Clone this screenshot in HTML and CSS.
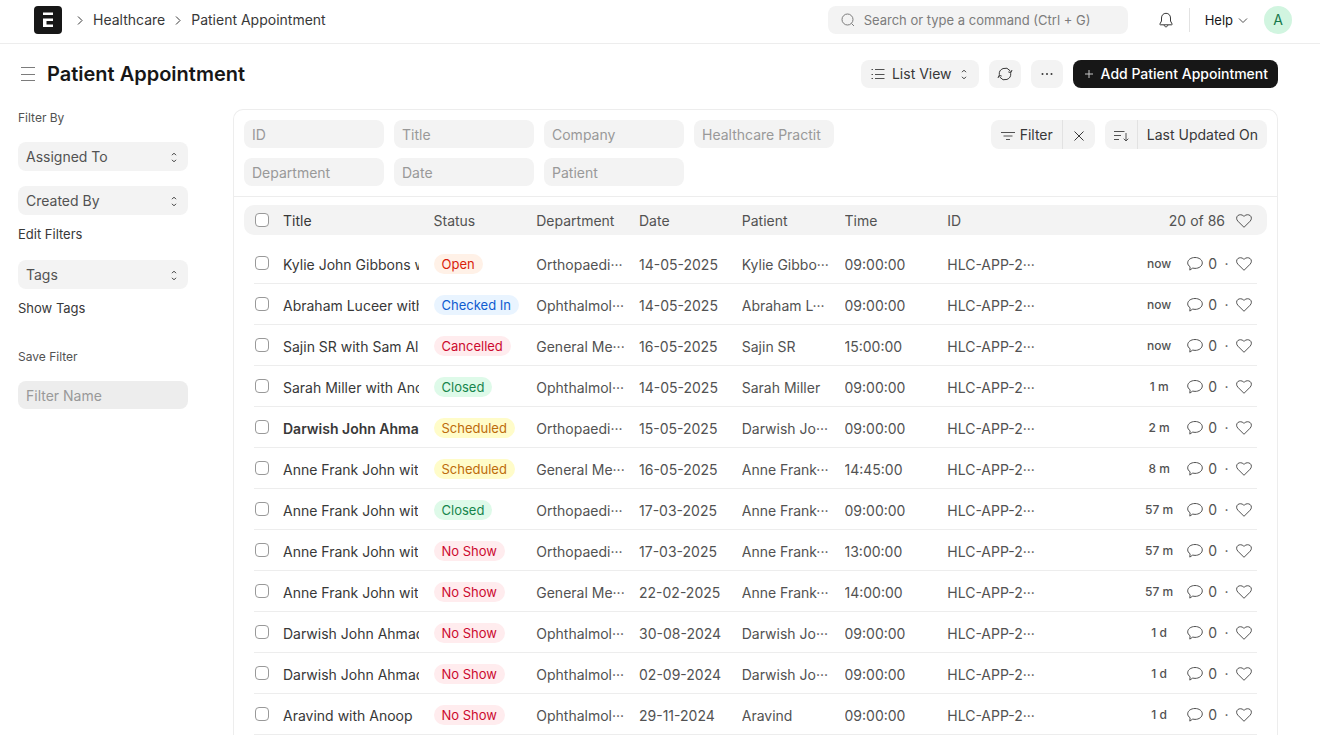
FILE: index.html
```html
<!DOCTYPE html>
<html lang="en">
<head>
  <meta charset="utf-8">
  <meta name="viewport" content="width=device-width, initial-scale=1">
  <title>Patient Appointment</title>
  <link rel="stylesheet" href="styles.css">
</head>
<body>
  <!-- icons -->
  <svg class="sprite" aria-hidden="true">
    <symbol id="i-right" viewBox="0 0 12 12"><path d="M4 2.500 8 6.500 4 10.500"/></symbol>
    <symbol id="i-down" viewBox="0 0 12 12"><path d="M2 4.500l4 4 4-4"/></symbol>
    <symbol id="i-select" viewBox="0 0 12 12"><path d="M4 4.200 6 2.200l2 2M4 8.800l2 2 2-2"/></symbol>
    <symbol id="i-heart" viewBox="0 0 16 16"><path d="M8 14.300 1.900 8.200C.2 6.500.2 3.900 1.800 2.600c1.700-1.300 4.200-1.100 5.600.3L8 3.400l.6-.5c1.400-1.400 3.900-1.600 5.600-.3 1.600 1.300 1.600 3.900-.1 5.600z"/></symbol>
    <symbol id="i-comment" viewBox="0 0 16 16"><path d="M8 1.500c4.100 0 7.300 2.300 7.300 5.400s-3.200 5.500-7.300 5.500c-.8 0-1.600-.1-2.300-.3l-2.900 2 .3-3.300C1.500 9.700.7 8.400.7 6.900.7 3.800 3.900 1.500 8 1.500z"/></symbol>
  </svg>

  <header class="navbar">
    <nav class="crumbs">
      <a href="#" class="logo" aria-label="Home">
        <svg width="28" height="28" viewBox="0 0 28 28"><rect width="28" height="28" rx="4" fill="#171717"/><path d="M9 6.500h10v2.500H9zM9 12.500h10v2.500h-6.500v3.500H19V21H9z" fill="#fff"/></svg>
      </a>
      <svg class="icon sep"><use href="#i-right"/></svg>
      <a href="#">Healthcare</a>
      <svg class="icon sep"><use href="#i-right"/></svg>
      <a href="#">Patient Appointment</a>
    </nav>
    <div class="nav-right">
      <label class="search">
        <svg class="icon" viewBox="0 0 16 16"><circle cx="7.500" cy="7.500" r="5.500"/><path d="M11.500 11.500 14 14"/></svg>
        <input type="text" aria-label="Search" placeholder="Search or type a command (Ctrl + G)">
      </label>
      <button class="bell" aria-label="Notifications">
        <svg class="icon" viewBox="0 0 16 16"><path d="M8 1.300c-2.700 0-4.500 2-4.500 4.700v3L1.900 12c-.2.400 0 .8.500.8h11.200c.5 0 .7-.4.500-.8L12.500 9V6c0-2.700-1.800-4.700-4.500-4.700zM6.200 13c.1 1.100.8 1.800 1.800 1.800s1.700-.7 1.800-1.800"/></svg>
      </button>
      <button class="help">Help <svg class="icon"><use href="#i-down"/></svg></button>
      <button class="avatar">A</button>
    </div>
  </header>

  <div class="page-head">
    <button class="menu" aria-label="Toggle sidebar">
      <svg class="icon" viewBox="0 0 16 14"><path d="M1 .5h14M1 7.500h14M1 13.500h14"/></svg>
    </button>
    <h1>Patient Appointment</h1>
    <div class="actions">
      <button class="btn view">
        <svg class="icon" viewBox="0 0 16 16"><path d="M5 3.500h9.500M5 8.500h9.500M5 12.500h9.500M1.500 3.500H3M1.500 8.500H3M1.500 12.500H3"/></svg>
        List View
        <svg class="icon select"><use href="#i-select"/></svg>
      </button>
      <button class="btn square" aria-label="Refresh">
        <svg class="icon dark" viewBox="0 0 16 16"><path d="M2.300 8.800A5.900 5.900 0 0 1 13 4.700l.8 1M13.700 7.200A5.900 5.900 0 0 1 3 11.300l-.8-1M15 4l-1.100 2.700-2.600-.8M1 12l1.100-2.700 2.600.8"/></svg>
      </button>
      <button class="btn square" aria-label="More">
        <svg class="icon dots" viewBox="0 0 16 16"><circle cx="3.500" cy="8" r="1"/><circle cx="8" cy="8" r="1"/><circle cx="12.500" cy="8" r="1"/></svg>
      </button>
      <button class="btn primary">
        <svg class="icon plus" viewBox="0 0 10 10"><path d="M5 1v8M1 5h8"/></svg>
        Add Patient Appointment
      </button>
    </div>
  </div>

  <div class="layout">
    <aside class="sidebar">
      <p class="side-label">Filter By</p>
      <button class="side-btn">Assigned To <svg class="icon select"><use href="#i-select"/></svg></button>
      <button class="side-btn">Created By <svg class="icon select"><use href="#i-select"/></svg></button>
      <a href="#" class="side-link">Edit Filters</a>
      <button class="side-btn">Tags <svg class="icon select"><use href="#i-select"/></svg></button>
      <a href="#" class="side-link">Show Tags</a>
      <label class="side-label save" for="filter-name">Save Filter</label>
      <input type="text" id="filter-name" class="filter-name" placeholder="Filter Name">
    </aside>

    <main class="list">
      <div class="filters">
        <div class="fields">
          <input type="text" aria-label="ID" placeholder="ID">
          <input type="text" aria-label="Title" placeholder="Title">
          <input type="text" aria-label="Company" placeholder="Company">
          <input type="text" aria-label="Healthcare Practitioner" placeholder="Healthcare Practit">
          <input type="text" aria-label="Department" placeholder="Department">
          <input type="text" aria-label="Date" placeholder="Date">
          <input type="text" aria-label="Patient" placeholder="Patient">
        </div>
        <div class="group">
          <button>
            <svg class="icon" viewBox="0 0 16 16"><path d="M1 5.500h14M3.500 9h9M6 12.500h4"/></svg>
            Filter
          </button>
          <button class="icon-only" aria-label="Clear filters">
            <svg class="icon dark" viewBox="0 0 16 16"><path d="M3.500 4.500l9 9M12.500 4.500l-9 9"/></svg>
          </button>
        </div>
        <div class="group">
          <button class="icon-only" aria-label="Sort direction">
            <svg class="icon" viewBox="0 0 16 16"><path d="M1 4.500h10.500M1 8.500h7M1 12.500h5M13 6v8M10.700 11.700 13 14l2.300-2.300"/></svg>
          </button>
          <button>Last Updated On</button>
        </div>
      </div>

      <table>
        <thead>
          <tr>
            <th class="subject"><input type="checkbox" aria-label="Select all"><span>Title</span></th>
            <th>Status</th><th>Department</th><th>Date</th><th>Patient</th><th>Time</th><th>ID</th>
            <th class="meta">20 of 86 <svg class="icon heart"><use href="#i-heart"/></svg></th>
          </tr>
        </thead>
        <tbody>
          <tr>
            <td class="subject"><input type="checkbox" aria-label="Select row"><span>Kylie John Gibbons with</span></td>
            <td class="status"><span class="pill orange">Open</span></td>
            <td>Orthopaedi···</td><td>14-05-2025</td><td>Kylie Gibbo···</td><td>09:00:00</td><td>HLC-APP-2···</td>
            <td class="meta"><span class="ago">now</span><svg class="icon comment"><use href="#i-comment"/></svg><span>0</span><span class="dot">·</span><svg class="icon heart"><use href="#i-heart"/></svg></td>
          </tr>
          <tr>
            <td class="subject"><input type="checkbox" aria-label="Select row"><span>Abraham Luceer with</span></td>
            <td class="status"><span class="pill blue">Checked In</span></td>
            <td>Ophthalmol···</td><td>14-05-2025</td><td>Abraham L···</td><td>09:00:00</td><td>HLC-APP-2···</td>
            <td class="meta"><span class="ago">now</span><svg class="icon comment"><use href="#i-comment"/></svg><span>0</span><span class="dot">·</span><svg class="icon heart"><use href="#i-heart"/></svg></td>
          </tr>
          <tr>
            <td class="subject"><input type="checkbox" aria-label="Select row"><span>Sajin SR with Sam Al</span></td>
            <td class="status"><span class="pill red">Cancelled</span></td>
            <td>General Me···</td><td>16-05-2025</td><td>Sajin SR</td><td>15:00:00</td><td>HLC-APP-2···</td>
            <td class="meta"><span class="ago">now</span><svg class="icon comment"><use href="#i-comment"/></svg><span>0</span><span class="dot">·</span><svg class="icon heart"><use href="#i-heart"/></svg></td>
          </tr>
          <tr>
            <td class="subject"><input type="checkbox" aria-label="Select row"><span>Sarah Miller with Ano</span></td>
            <td class="status"><span class="pill green">Closed</span></td>
            <td>Ophthalmol···</td><td>14-05-2025</td><td>Sarah Miller</td><td>09:00:00</td><td>HLC-APP-2···</td>
            <td class="meta"><span class="ago">1 m</span><svg class="icon comment"><use href="#i-comment"/></svg><span>0</span><span class="dot">·</span><svg class="icon heart"><use href="#i-heart"/></svg></td>
          </tr>
          <tr>
            <td class="subject unseen"><input type="checkbox" aria-label="Select row"><span>Darwish John Ahma</span></td>
            <td class="status"><span class="pill yellow">Scheduled</span></td>
            <td>Orthopaedi···</td><td>15-05-2025</td><td>Darwish Jo···</td><td>09:00:00</td><td>HLC-APP-2···</td>
            <td class="meta"><span class="ago">2 m</span><svg class="icon comment"><use href="#i-comment"/></svg><span>0</span><span class="dot">·</span><svg class="icon heart"><use href="#i-heart"/></svg></td>
          </tr>
          <tr>
            <td class="subject"><input type="checkbox" aria-label="Select row"><span>Anne Frank John wit</span></td>
            <td class="status"><span class="pill yellow">Scheduled</span></td>
            <td>General Me···</td><td>16-05-2025</td><td>Anne Frank···</td><td>14:45:00</td><td>HLC-APP-2···</td>
            <td class="meta"><span class="ago">8 m</span><svg class="icon comment"><use href="#i-comment"/></svg><span>0</span><span class="dot">·</span><svg class="icon heart"><use href="#i-heart"/></svg></td>
          </tr>
          <tr>
            <td class="subject"><input type="checkbox" aria-label="Select row"><span>Anne Frank John wit</span></td>
            <td class="status"><span class="pill green">Closed</span></td>
            <td>Orthopaedi···</td><td>17-03-2025</td><td>Anne Frank···</td><td>09:00:00</td><td>HLC-APP-2···</td>
            <td class="meta"><span class="ago">57 m</span><svg class="icon comment"><use href="#i-comment"/></svg><span>0</span><span class="dot">·</span><svg class="icon heart"><use href="#i-heart"/></svg></td>
          </tr>
          <tr>
            <td class="subject"><input type="checkbox" aria-label="Select row"><span>Anne Frank John wit</span></td>
            <td class="status"><span class="pill red">No Show</span></td>
            <td>Orthopaedi···</td><td>17-03-2025</td><td>Anne Frank···</td><td>13:00:00</td><td>HLC-APP-2···</td>
            <td class="meta"><span class="ago">57 m</span><svg class="icon comment"><use href="#i-comment"/></svg><span>0</span><span class="dot">·</span><svg class="icon heart"><use href="#i-heart"/></svg></td>
          </tr>
          <tr>
            <td class="subject"><input type="checkbox" aria-label="Select row"><span>Anne Frank John wit</span></td>
            <td class="status"><span class="pill red">No Show</span></td>
            <td>General Me···</td><td>22-02-2025</td><td>Anne Frank···</td><td>14:00:00</td><td>HLC-APP-2···</td>
            <td class="meta"><span class="ago">57 m</span><svg class="icon comment"><use href="#i-comment"/></svg><span>0</span><span class="dot">·</span><svg class="icon heart"><use href="#i-heart"/></svg></td>
          </tr>
          <tr>
            <td class="subject"><input type="checkbox" aria-label="Select row"><span>Darwish John Ahmad</span></td>
            <td class="status"><span class="pill red">No Show</span></td>
            <td>Ophthalmol···</td><td>30-08-2024</td><td>Darwish Jo···</td><td>09:00:00</td><td>HLC-APP-2···</td>
            <td class="meta"><span class="ago">1 d</span><svg class="icon comment"><use href="#i-comment"/></svg><span>0</span><span class="dot">·</span><svg class="icon heart"><use href="#i-heart"/></svg></td>
          </tr>
          <tr>
            <td class="subject"><input type="checkbox" aria-label="Select row"><span>Darwish John Ahmad</span></td>
            <td class="status"><span class="pill red">No Show</span></td>
            <td>Ophthalmol···</td><td>02-09-2024</td><td>Darwish Jo···</td><td>09:00:00</td><td>HLC-APP-2···</td>
            <td class="meta"><span class="ago">1 d</span><svg class="icon comment"><use href="#i-comment"/></svg><span>0</span><span class="dot">·</span><svg class="icon heart"><use href="#i-heart"/></svg></td>
          </tr>
          <tr>
            <td class="subject"><input type="checkbox" aria-label="Select row"><span>Aravind with Anoop</span></td>
            <td class="status"><span class="pill red">No Show</span></td>
            <td>Ophthalmol···</td><td>29-11-2024</td><td>Aravind</td><td>09:00:00</td><td>HLC-APP-2···</td>
            <td class="meta"><span class="ago">1 d</span><svg class="icon comment"><use href="#i-comment"/></svg><span>0</span><span class="dot">·</span><svg class="icon heart"><use href="#i-heart"/></svg></td>
          </tr>
        </tbody>
      </table>
    </main>
  </div>
</body>
</html>
```
FILE: styles.css
```css
*{
  box-sizing: border-box;
}
body{
  margin: 0;
  background-color: #fff;
  color: #383838;
  font-family: Inter, "Liberation Sans", sans-serif;
  font-size: 14px;
  font-weight: 420;
  line-height: 20px;
}
a{
  color: inherit;
  text-decoration: none;
}
button,input{
  margin: 0;
  border: 0;
  font: inherit;
  color: inherit;
}
button{
  display: flex;
  align-items: center;
  padding: 0;
  background: none;
  cursor: pointer;
  white-space: nowrap;
}
input::placeholder{
  color: #999;
  opacity: 1;
}
.sprite{
  display: none;
}
.icon{
  flex: none;
  width: 16px;
  height: 16px;
  fill: none;
  stroke: #525252;
}
.icon.dark{
  stroke: #383838;
}

/* navbar */
.navbar{
  display: flex;
  justify-content: space-between;
  padding: 6px 28px 9px 34px;
  border-bottom: 1px solid #ededed;
}
.crumbs,.nav-right{
  display: flex;
  align-items: center;
}
.logo{
  height: 28px;
  margin-right: 5px;
}
.crumbs .sep{
  width: 12px;
  height: 12px;
  margin: 0 7px;
  stroke: #383838;
}
.search{
  display: flex;
  align-items: center;
  gap: 8px;
  width: 300px;
  height: 28px;
  padding: 0 12px;
  margin-right: 30px;
  border-radius: 8px;
  background-color: #f3f3f3;
}
.search .icon{
  stroke: #7c7c7c;
}
.search input{
  flex: 1;
  min-width: 0;
  padding: 0;
  background: none;
  font-size: 13px;
}
.search input::placeholder{
  color: #7c7c7c;
}
.bell{
  height: 24px;
  padding-right: 15px;
  border-right: 1px solid #e2e2e2;
}
.bell .icon{
  stroke: #383838;
}
.help{
  gap: 4px;
  margin: 0 15px;
  color: #171717;
  font-size: 13px;
}
.help .icon{
  width: 12px;
  height: 12px;
}
.avatar{
  justify-content: center;
  width: 28px;
  height: 28px;
  border-radius: 50%;
  background-color: #d1f5e0;
  color: #16794c;
}

/* page head */
.page-head{
  display: flex;
  align-items: center;
  padding: 16px 42px 0 20px;
}
.menu .icon{
  height: 14px;
  stroke: #7c7c7c;
}
h1{
  margin: 0 0 0 11px;
  color: #171717;
  font-size: 20px;
  font-weight: 600;
  line-height: 28px;
}
.actions{
  display: flex;
  gap: 10px;
  margin-left: auto;
}
.btn{
  justify-content: center;
  gap: 6px;
  height: 28px;
  padding: 0 9px;
  border-radius: 8px;
  background-color: #f3f3f3;
}
.btn.square{
  width: 32px;
  padding: 0;
}
.icon.select{
  width: 12px;
  height: 12px;
  stroke: #383838;
}
.dots{
  fill: #383838;
  stroke: none;
}
.btn.primary{
  padding: 0 10px;
  background-color: #171717;
  color: #fff;
  font-weight: 500;
}
.plus{
  width: 12px;
  height: 10px;
  stroke: #c7c7c7;
}

.layout{
  display: flex;
  gap: 45px;
  padding: 21px 42px 0 18px;
}

/* sidebar */
.sidebar{
  display: flex;
  flex-direction: column;
  flex: none;
  width: 170px;
  color: #525252;
}
.side-label{
  margin: 0 0 16px;
  font-size: 12px;
  line-height: 17px;
}
.side-btn{
  justify-content: space-between;
  height: 29px;
  margin-bottom: 15px;
  padding: 0 8px;
  border-radius: 8px;
  background-color: #f3f3f3;
}
.side-link{
  margin: -5px 0 16px;
  color: #383838;
  font-size: 13px;
  line-height: 19px;
}
.save{
  margin-top: 14px;
}
.filter-name{
  width: 100%;
  height: 28px;
  padding: 0 8px;
  border-radius: 8px;
  background-color: #ededed;
}

/* list */
.list{
  flex: 1;
  min-width: 0;
  border: 1px solid #ededed;
  border-bottom: 0;
  border-radius: 10px 10px 0 0;
}
.filters{
  display: flex;
  align-items: flex-start;
  gap: 10px;
  padding: 10px;
  border-bottom: 1px solid #ededed;
}
.fields{
  display: flex;
  flex: 1;
  flex-wrap: wrap;
  gap: 10px;
  padding-right: 100px;
}
.fields input{
  width: 140px;
  height: 28px;
  padding: 0 8px;
  border-radius: 8px;
  background-color: #f3f3f3;
}
.group{
  display: flex;
}
.group button{
  gap: 4px;
  height: 29px;
  padding: 0 9px;
  background-color: #f3f3f3;
}
.group .icon-only{
  padding: 0 8px;
}
.group button:first-child{
  border-right: 1px solid #e2e2e2;
  border-radius: 8px 0 0 8px;
}
.group button:last-child{
  border-radius: 0 8px 8px 0;
}

table,thead,tbody{
  display: block;
}
table{
  padding-top: 8px;
  color: #525252;
}
tr{
  display: grid;
  grid-template-columns: minmax(0, 165fr) repeat(6, minmax(0, 88fr)) 207px;
  column-gap: 15px;
  align-items: center;
  height: 41px;
  margin: 0 20px;
  border-bottom: 1px solid #ededed;
}
thead tr{
  height: 30px;
  margin: 0 10px 8px;
  padding: 0 10px;
  border: 0;
  border-radius: 10px;
  background-color: #f3f3f3;
}
th,td{
  padding: 4px 0 0;
  overflow: hidden;
  text-align: left;
  white-space: nowrap;
  font-weight: inherit;
}
th{
  padding-top: 2px;
}
.subject{
  display: flex;
  align-items: center;
  padding: 0;
  color: #383838;
}
.subject span{
  padding-top: 4px;
  overflow: hidden;
}
th.subject span{
  padding-top: 2px;
}
.unseen{
  font-weight: 600;
}
input[type="checkbox"]{
  flex: none;
  width: 14px;
  height: 14px;
  margin: 0 14px 0 1px;
  border: 1px solid #999;
  border-radius: 4px;
  background-color: #fff;
  appearance: none;
}
.status{
  padding-top: 2px;
}
.pill{
  display: block;
  width: fit-content;
  padding: 0 8px;
  border-radius: 10px;
  font-size: 13px;
  line-height: 20px;
}
.orange{
  background-color: #fff1e7;
  color: #d91e0b;
}
.blue{
  background-color: #e9f4ff;
  color: #0e5bd0;
}
.red{
  background-color: #ffecee;
  color: #cc0a2f;
}
.green{
  background-color: #defae9;
  color: #16854c;
}
.yellow{
  background-color: #fffcc9;
  color: #bd6b0b;
}
.meta{
  display: flex;
  align-items: center;
  justify-content: flex-end;
  padding: 2px 5px 0 0;
}
.ago{
  width: 40px;
  margin-right: 8px;
  font-size: 12px;
  font-weight: 500;
  text-align: center;
}
.comment{
  margin-right: 5px;
}
.dot{
  width: 19px;
  text-align: center;
}
th .heart{
  margin-left: 11px;
}
```
